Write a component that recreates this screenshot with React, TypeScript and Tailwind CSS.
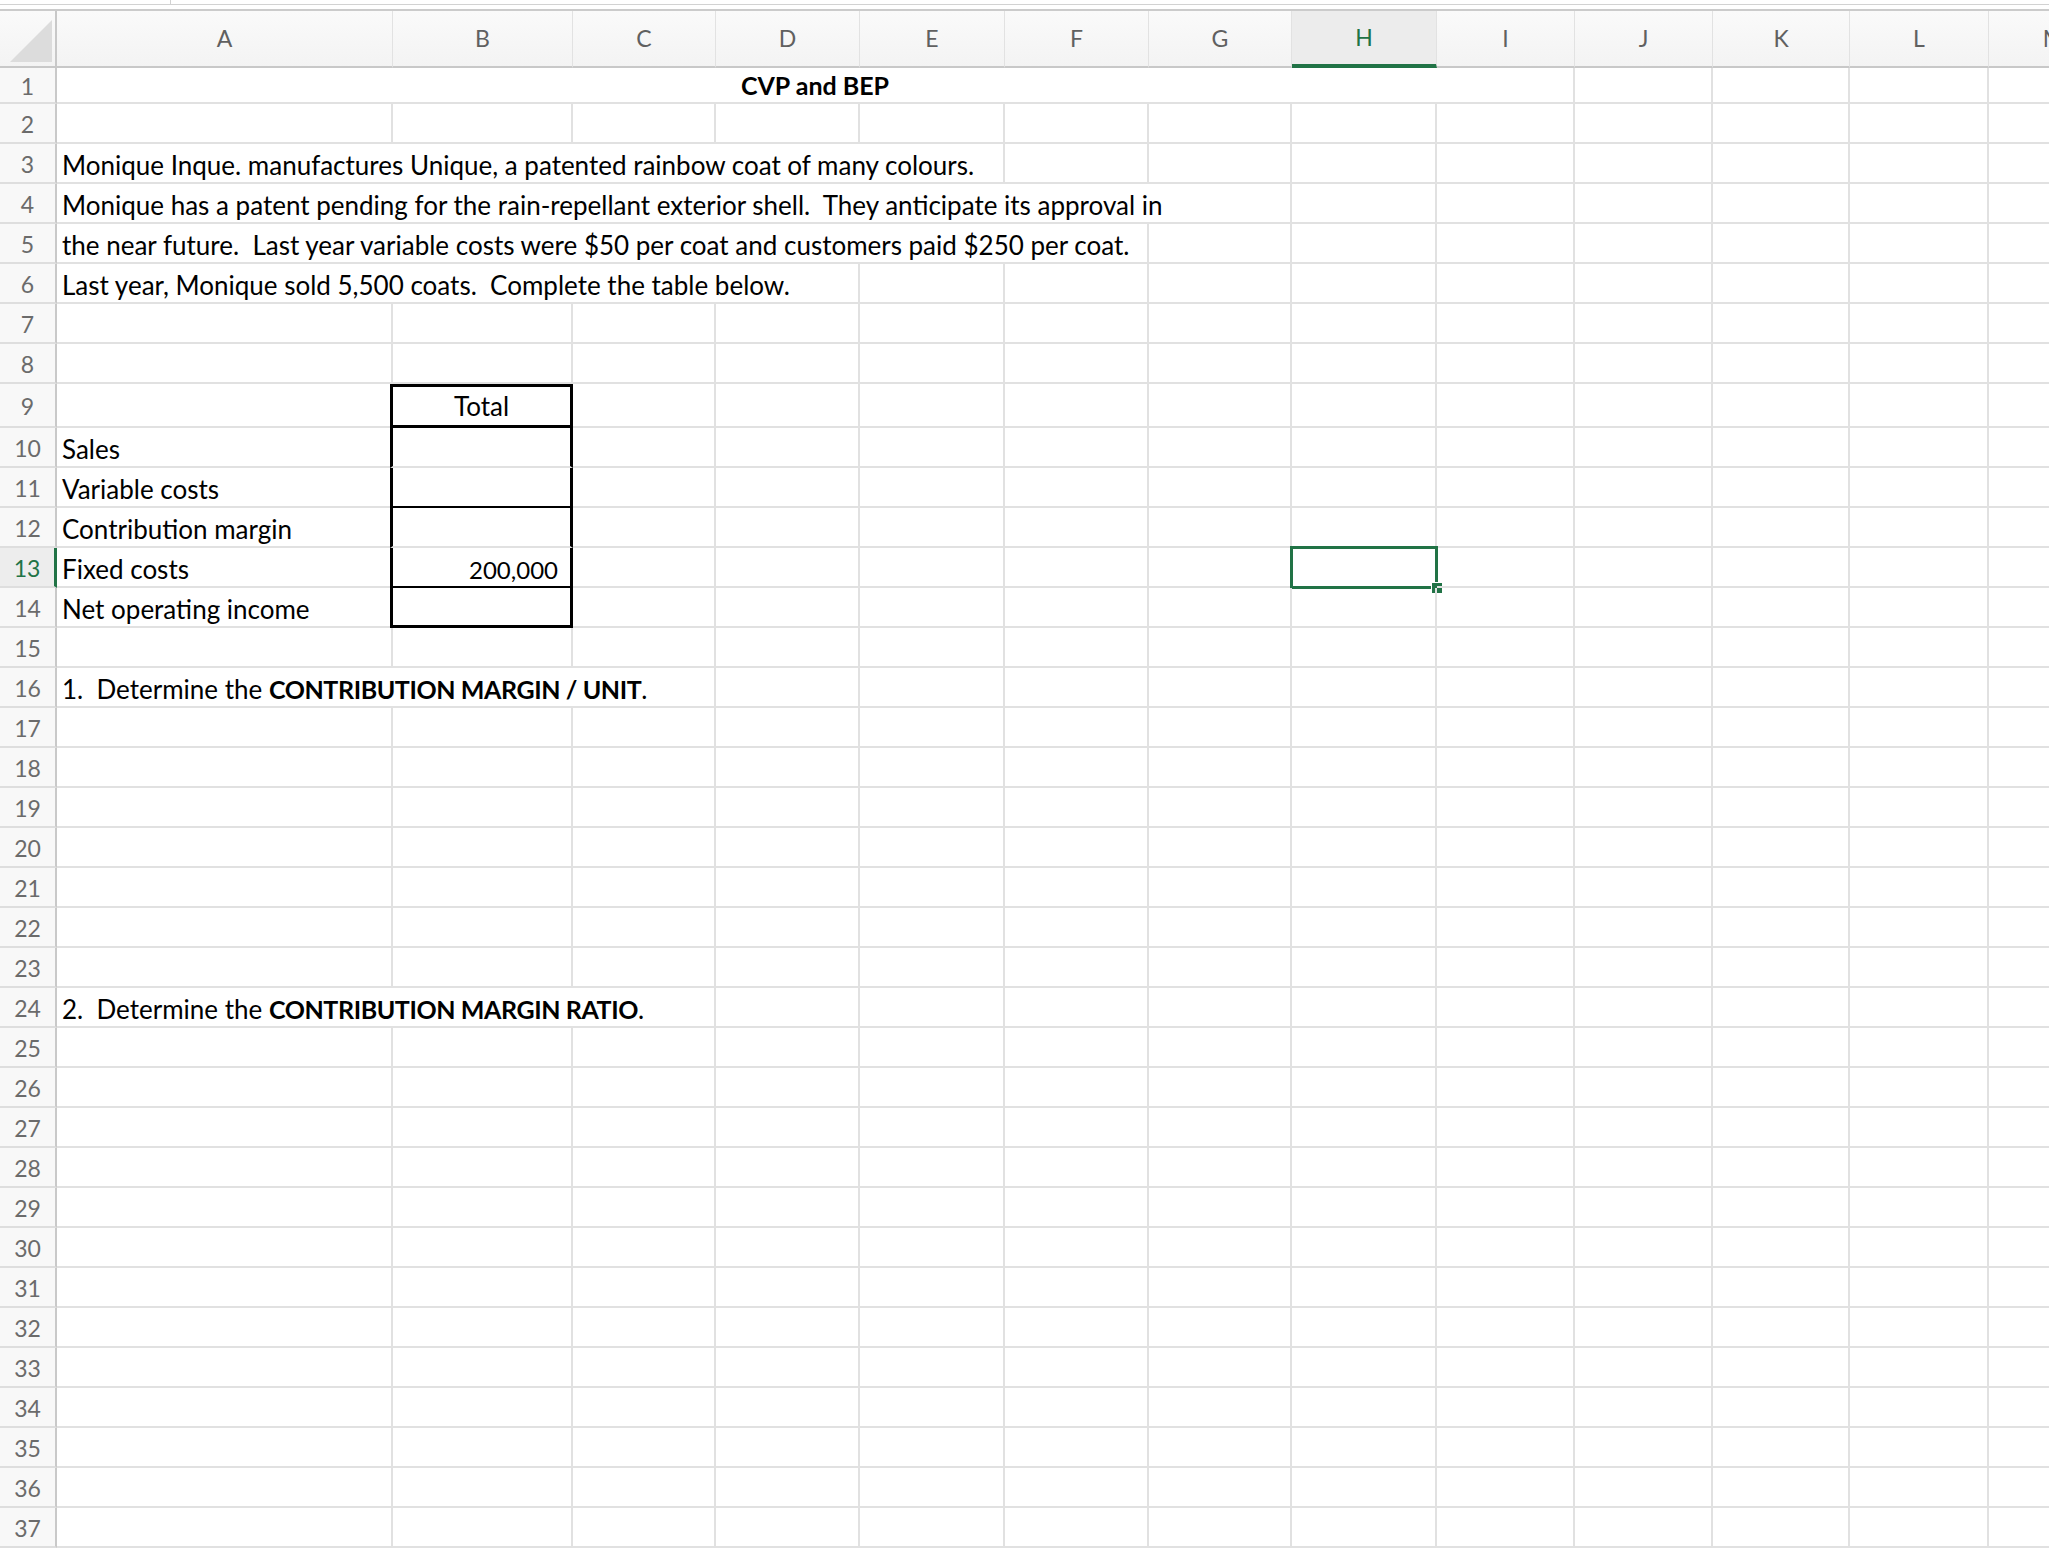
import type { ReactNode } from "react";

type Cell = {
  col: number;
  span?: number;
  align?: "left" | "center" | "right";
  content: ReactNode;
};

const COLUMNS = ["A", "B", "C", "D", "E", "F", "G", "H", "I", "J", "K", "L", "M"];

// same template for the header and every sheet row
const GRID =
  "grid grid-cols-[57px_336px_180px_143px_144px_145px_144px_143px_145px_138px_138px_137px_139px_130px]";

const SPAN: Record<number, string> = {
  1: "",
  3: "col-span-3",
  4: "col-span-4",
  5: "col-span-5",
  6: "col-span-6",
  7: "col-span-7",
  9: "col-span-9",
};

const ROWS: Record<number, Cell[]> = {
  1: [
    {
      col: 0,
      span: 9,
      align: "center",
      content: <span className="font-bold text-[25px]">CVP and BEP</span>,
    },
  ],
  3: [{ col: 0, span: 5, content: "Monique Inque. manufactures Unique, a patented rainbow coat of many colours." }],
  4: [
    {
      col: 0,
      span: 7,
      content: "Monique has a patent pending for the rain-repellant exterior shell.  They anticipate its approval in",
    },
  ],
  5: [
    {
      col: 0,
      span: 6,
      content: "the near future.  Last year variable costs were $50 per coat and customers paid $250 per coat.",
    },
  ],
  6: [{ col: 0, span: 4, content: "Last year, Monique sold 5,500 coats.  Complete the table below." }],
  9: [{ col: 1, align: "center", content: "Total" }],
  10: [{ col: 0, content: "Sales" }],
  11: [{ col: 0, content: "Variable costs" }],
  12: [{ col: 0, content: "Contribution margin" }],
  13: [
    { col: 0, content: "Fixed costs" },
    { col: 1, align: "right", content: <span className="text-[24px]">200,000</span> },
  ],
  14: [{ col: 0, content: "Net operating income" }],
  16: [
    {
      col: 0,
      span: 3,
      content: (
        <>
          {"1.  Determine the "}
          <span className="font-bold text-[25px] tracking-[-0.4px]">CONTRIBUTION MARGIN / UNIT</span>.
        </>
      ),
    },
  ],
  24: [
    {
      col: 0,
      span: 3,
      content: (
        <>
          {"2.  Determine the "}
          <span className="font-bold text-[25px] tracking-[-0.4px]">CONTRIBUTION MARGIN RATIO</span>.
        </>
      ),
    },
  ],
};

const rowHeight = (r: number) => {
  if (r === 1) return "h-[36px]";
  if (r === 9) return "h-[44px]";
  return "h-[40px]";
};

const gridline = "border-r-2 border-b-2 border-[#e1e1e1]";

// borders of the little Total table in column B
const cellBorder = (r: number, col: number) => {
  const inTable = r >= 9 && r <= 14;
  if (col === 0 && inTable) return "border-b-2 border-[#e1e1e1]";
  if (col !== 1 || !inTable) return gridline;
  if (r === 9) return "-ml-[3px] border-[3px] border-black";
  if (r === 10 || r === 12)
    return "-ml-[3px] border-l-[3px] border-r-[3px] border-b-2 border-l-black border-r-black border-b-[#e1e1e1]";
  if (r === 11 || r === 13) return "-ml-[3px] border-l-[3px] border-r-[3px] border-b-2 border-black";
  return "-ml-[3px] border-l-[3px] border-r-[3px] border-b-[3px] border-black";
};

function SheetRow({ r }: { r: number }) {
  const cells = ROWS[r] || [];
  const selected = r === 13;
  const out: ReactNode[] = [];
  let c = 0;
  while (c < COLUMNS.length) {
    const cell = cells.find((x) => x.col === c);
    const span = cell?.span || 1;
    const align =
      cell?.align === "center"
        ? "justify-center"
        : cell?.align === "right"
          ? "justify-end pr-[12px]"
          : "justify-start pl-[5px]";
    const vAlign = r === 9 ? "items-center" : "items-end pb-[4px]";
    out.push(
      <div
        key={c}
        className={`relative flex ${vAlign} ${align} ${SPAN[span]} ${cellBorder(r, c)} whitespace-pre text-black`}
      >
        {cell?.content}
        {selected && c === 7 && (
          <>
            <div className="absolute -left-[2px] -top-[2px] -right-[3px] -bottom-[3px] border-[3px] border-[#217346]" />
            <div className="absolute -right-[8px] -bottom-[8px] w-[12px] h-[12px] bg-[#217346] border border-white" />
          </>
        )}
      </div>
    );
    c += span;
  }

  return (
    <div className={`${GRID} ${rowHeight(r)}`}>
      <div
        className={`flex items-center justify-center pt-[3px] border-b-2 border-b-[#dedede] text-[23px] ${
          selected
            ? "bg-[#ededed] text-[#217346] border-r-[3px] border-r-[#217346]"
            : "bg-[#f8f8f8] text-[#6b6b6b] border-r-2 border-r-[#c9c9c9]"
        }`}
      >
        {r}
      </div>
      {out}
    </div>
  );
}

export default function App() {
  const rows = Array.from({ length: 37 }, (_, i) => i + 1);

  return (
    <div className="w-[2049px] h-[1553px] overflow-hidden bg-white font-['Lato','Liberation_Sans',sans-serif] text-[26px] leading-none">
      {/* bottom edge of the formula bar */}
      <div className="h-[9px]">
        <div className="h-[5px] border-b border-[#d2d2d2]">
          <div className="w-[171px] h-full border-r border-[#d2d2d2]" />
        </div>
      </div>

      <div className={`${GRID} h-[59px] border-t-2 border-[#cbcbcb] bg-gradient-to-b from-[#fafafa] to-[#f3f3f3]`}>
        <div className="relative border-r-2 border-b-2 border-[#c8c8c8]">
          <svg width="57" height="57" viewBox="0 0 57 57" className="absolute left-0 top-0">
            <polygon points="52,9 52,51 10,51" fill="#dcdcdc" />
          </svg>
        </div>
        {COLUMNS.map((col) =>
          col === "H" ? (
            <div
              key={col}
              className="flex items-center justify-center border-r border-r-[#e2e2e2] border-b-4 border-b-[#217346] bg-[#ececec] text-[#217346] text-[23px]"
            >
              {col}
            </div>
          ) : (
            <div
              key={col}
              className="flex items-center justify-center border-r border-r-[#e2e2e2] border-b-2 border-b-[#c8c8c8] text-[#606060] text-[23px]"
            >
              {col}
            </div>
          )
        )}
      </div>

      {rows.map((r) => (
        <SheetRow key={r} r={r} />
      ))}
    </div>
  );
}
